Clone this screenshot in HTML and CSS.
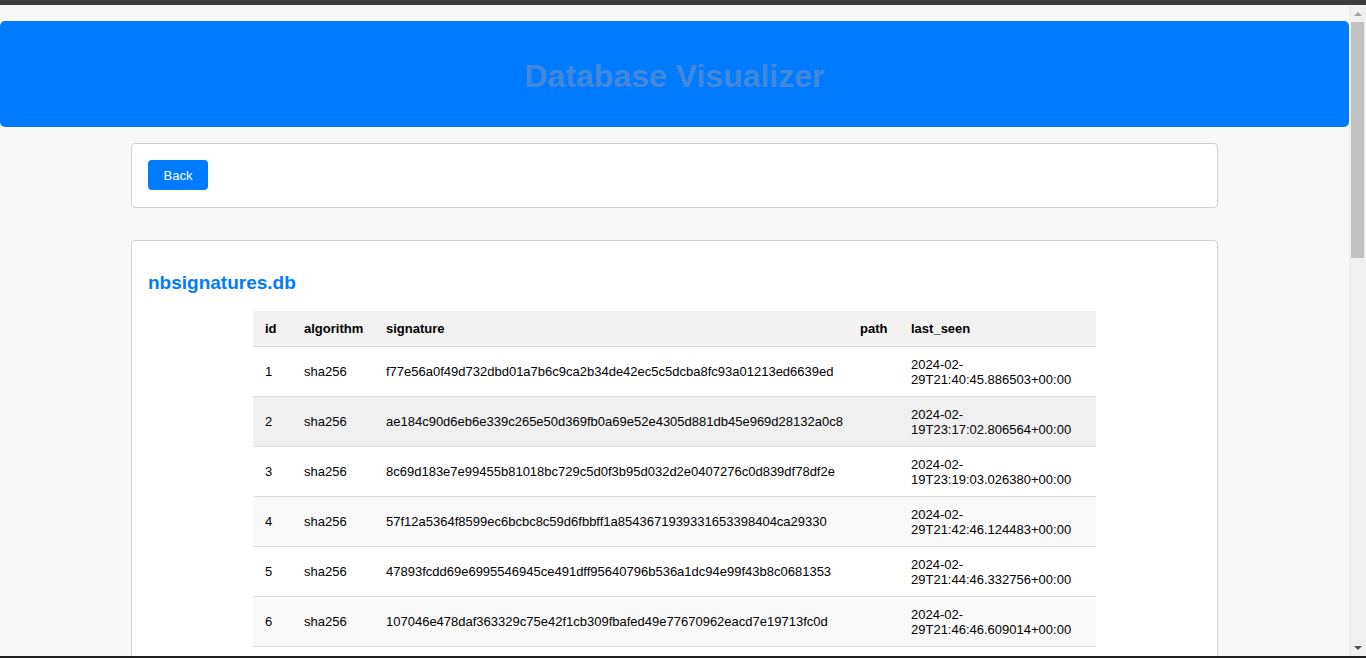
FILE: index.html
```html
<!DOCTYPE html>
<html lang="en">
<head>
<meta charset="utf-8">
<title>Database Visualizer</title>
<link rel="stylesheet" href="styles.css">
</head>
<body>
<div class="topbar"></div>
<div class="viewport">
  <div class="page">
    <header class="site-header">
      <h1 class="site-title">Database Visualizer</h1>
    </header>
    <main class="container">
      <section class="card card-nav">
        <button class="btn" type="button">Back</button>
      </section>
      <section class="card card-table">
        <h2 class="db-name">nbsignatures.db</h2>
        <table class="data-table">
          <colgroup>
            <col class="c-id"><col class="c-alg"><col class="c-sig"><col class="c-path"><col class="c-seen">
          </colgroup>
          <thead>
            <tr><th>id</th><th>algorithm</th><th>signature</th><th>path</th><th>last_seen</th></tr>
          </thead>
          <tbody>
            <tr><td>1</td><td>sha256</td><td>f77e56a0f49d732dbd01a7b6c9ca2b34de42ec5c5dcba8fc93a01213ed6639ed</td><td></td><td>2024-02-29T21:40:45.886503+00:00</td></tr>
            <tr class="hover"><td>2</td><td>sha256</td><td>ae184c90d6eb6e339c265e50d369fb0a69e52e4305d881db45e969d28132a0c8</td><td></td><td>2024-02-19T23:17:02.806564+00:00</td></tr>
            <tr><td>3</td><td>sha256</td><td>8c69d183e7e99455b81018bc729c5d0f3b95d032d2e0407276c0d839df78df2e</td><td></td><td>2024-02-19T23:19:03.026380+00:00</td></tr>
            <tr><td>4</td><td>sha256</td><td>57f12a5364f8599ec6bcbc8c59d6fbbff1a8543671939331653398404ca29330</td><td></td><td>2024-02-29T21:42:46.124483+00:00</td></tr>
            <tr><td>5</td><td>sha256</td><td>47893fcdd69e6995546945ce491dff95640796b536a1dc94e99f43b8c0681353</td><td></td><td>2024-02-29T21:44:46.332756+00:00</td></tr>
            <tr><td>6</td><td>sha256</td><td>107046e478daf363329c75e42f1cb309fbafed49e77670962eacd7e19713fc0d</td><td></td><td>2024-02-29T21:46:46.609014+00:00</td></tr>
            <tr class="row-more"><td></td><td></td><td></td><td></td><td></td></tr>
          </tbody>
        </table>
      </section>
    </main>
  </div>
  <div class="scrollbar" aria-hidden="true">
    <div class="sb-arrow sb-up"></div>
    <div class="sb-track"><div class="sb-thumb"></div></div>
    <div class="sb-arrow sb-down"></div>
  </div>
</div>
<div class="bottombar"></div>
</body>
</html>
```

FILE: styles.css
```css
* { box-sizing: border-box; }

html, body {
  margin: 0;
  padding: 0;
  height: 100%;
  overflow: hidden;
}

body {
  display: flex;
  flex-direction: column;
  background: #f8f8f8;
  font-family: "Liberation Sans", Arial, sans-serif;
  font-size: 13px;
  color: #000;
}

.topbar {
  height: 5px;
  flex: none;
  background: #3c3c3c;
}

.bottombar {
  height: 2px;
  flex: none;
  background: #202020;
}

.viewport {
  flex: 1;
  display: flex;
  min-height: 0;
}

.page {
  flex: 1;
  min-width: 0;
  overflow: hidden;
  padding-top: 16px;
}

.site-header {
  height: 106px;
  padding-top: 3px;
  background: #007bff;
  border-radius: 5px;
  display: flex;
  align-items: center;
  justify-content: center;
}

.site-title {
  margin: 0;
  font-size: 32px;
  font-weight: bold;
  color: #4289dc;
  line-height: 1;
}

.container {
  width: 1087px;
  margin: 16px auto 0;
  display: flex;
  flex-direction: column;
  gap: 32px;
}

.card {
  background: #fff;
  border: 1px solid #d0d0d0;
  border-radius: 4px;
  padding: 16px;
}

.card-nav {
  height: 65px;
}

.btn {
  height: 30px;
  width: 60px;
  border: none;
  border-radius: 4px;
  background: #007bff;
  color: #fff;
  font-family: "Liberation Sans", Arial, sans-serif;
  font-size: 13px;
  padding: 0;
  cursor: pointer;
}

.db-name {
  margin: 15px 0 17px;
  font-size: 19px;
  line-height: 22px;
  font-weight: bold;
  color: #007bff;
}

.data-table {
  width: 843px;
  margin: 0 auto;
  border-collapse: collapse;
  table-layout: fixed;
  line-height: 15px;
}

.c-id { width: 39px; }
.c-alg { width: 82px; }
.c-sig { width: 474px; }
.c-path { width: 51px; }
.c-seen { width: 197px; }

.data-table th {
  background: #f2f2f2;
  text-align: left;
  font-weight: bold;
  padding: 10px 12px;
  border-bottom: 1px solid #dddddd;
  white-space: nowrap;
}

.data-table td {
  padding: 9.5px 12px;
  border-bottom: 1px solid #dddddd;
  vertical-align: middle;
  white-space: nowrap;
}

.data-table td:last-child {
  white-space: normal;
}

.data-table tbody tr:nth-child(even) {
  background: #f9f9f9;
}

.data-table tbody tr.hover {
  background: #f0f0f0;
}

.data-table tbody tr.row-more td {
  height: 50px;
}

.scrollbar {
  width: 17px;
  flex: none;
  background: #f0f0f0;
  display: flex;
  flex-direction: column;
  align-items: center;
}

.sb-arrow {
  height: 17px;
  width: 17px;
  flex: none;
  display: flex;
  align-items: center;
  justify-content: center;
}

.sb-up::before {
  content: "";
  border-left: 4px solid transparent;
  border-right: 4px solid transparent;
  border-bottom: 4px solid #a3a3a3;
}

.sb-down::before {
  content: "";
  border-left: 4px solid transparent;
  border-right: 4px solid transparent;
  border-top: 4px solid #505050;
}

.sb-track {
  flex: 1;
  width: 100%;
  padding: 0 2px;
}

.sb-thumb {
  height: 236px;
  background: #c1c1c1;
}
```
